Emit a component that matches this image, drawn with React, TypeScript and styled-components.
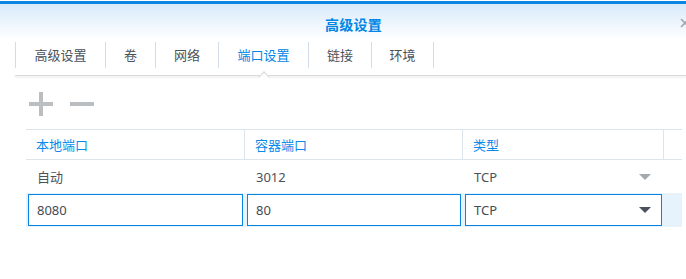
import styled, { createGlobalStyle } from "styled-components";

const GlobalStyle = createGlobalStyle`
  html, body {
    margin: 0;
    padding: 0;
    background: #fff;
  }
  body {
    font-family: "Noto Sans", "Noto Sans CJK SC", sans-serif;
    font-size: 13px;
    color: #4a525c;
    overflow: hidden;
  }
`;

const Window = styled.div`
  width: 686px;
  height: 279px;
  padding-top: 1px;
  background: #fff;
  box-sizing: border-box;
  overflow: hidden;
`;

const TitleBar = styled.div`
  position: relative;
  height: 39px;
  border-top: 3px solid #0a86e2;
  background: linear-gradient(#d8eafa, #ffffff);
  display: flex;
  align-items: center;
  justify-content: center;
  padding: 3px 0 0 21px;
  box-sizing: border-box;
`;

const Title = styled.div`
  font-size: 14px;
  font-weight: bold;
  color: #0086e5;
  letter-spacing: 0.3px;
`;

const Close = styled.svg`
  position: absolute;
  right: -4px;
  top: 14px;
`;

const TabBar = styled.div`
  display: flex;
  margin: 2px 0 0 15px;
  padding-bottom: 7px;
  border-bottom: 1px solid #d9dcdf;
  box-shadow: 0 2px 2px rgba(0, 0, 0, 0.05);
`;

// tab width: label plus ~18px padding each side plus the separator
const Tab = styled.div<{ $chars: number; $active?: boolean; $last?: boolean }>`
  position: relative;
  flex: none;
  width: ${(p) => Math.round(p.$chars * 13.3 + 36.5)}px;
  height: 26px;
  line-height: 26px;
  box-sizing: border-box;
  text-align: center;
  border-left: 1px solid #d3dde7;
  border-right: ${(p) => (p.$last ? "1px solid #d3dde7" : "0")};
  color: ${(p) => (p.$active ? "#0086e5" : "#4a525c")};
  white-space: nowrap;

  &::after {
    content: "";
    display: ${(p) => (p.$active ? "block" : "none")};
    position: absolute;
    left: 50%;
    bottom: -13px;
    width: 7px;
    height: 7px;
    margin-left: -4px;
    background: #fff;
    border-left: 1px solid #d6d9dc;
    border-top: 1px solid #d6d9dc;
    transform: rotate(45deg);
  }
`;

const Toolbar = styled.div`
  display: flex;
  align-items: center;
  gap: 17px;
  height: 53px;
  padding: 3px 0 0 29px;
  box-sizing: border-box;
`;

const ToolButton = styled.svg`
  display: block;
  opacity: 0.9;
`;

const Table = styled.div`
  margin-left: 26px;
  width: 656px;
`;

const Grid = styled.div`
  display: grid;
  grid-template-columns: 219px 218px 201px 18px;
`;

const HeadRow = styled(Grid)`
  height: 31px;
  border-top: 1px solid #dce4ec;
  border-bottom: 1px solid #dce4ec;
  box-sizing: border-box;
`;

const HeadCell = styled.div<{ $last?: boolean }>`
  display: flex;
  align-items: center;
  padding-left: 10px;
  color: #0a8ae8;
  border-right: ${(p) => (p.$last ? "0" : "1px solid #dce4ec")};
`;

const Row = styled(Grid)<{ $selected?: boolean }>`
  height: ${(p) => (p.$selected ? "34px" : "33px")};
  background: ${(p) => (p.$selected ? "#e6f2fc" : "transparent")};
`;

const Cell = styled.div`
  display: flex;
  align-items: center;
  justify-content: space-between;
  padding: 0 13px 0 11px;
`;

const EditCell = styled.div`
  display: flex;
  padding: 1px 2px;
`;

const Field = styled.div`
  flex: 1;
  display: flex;
  align-items: center;
  justify-content: space-between;
  border: 1px solid #0a84e0;
  background: #fff;
  padding: 0 10px 0 8px;
  color: #434b55;
`;

const Caret = styled.span<{ $color: string }>`
  width: 0;
  height: 0;
  border-left: 6px solid transparent;
  border-right: 6px solid transparent;
  border-top: 6px solid ${(p) => p.$color};
`;

const tabs = ["高级设置", "卷", "网络", "端口设置", "链接", "环境"];

export default function App() {
  return (
    <Window>
      <GlobalStyle />
      <TitleBar>
        <Title>高级设置</Title>
        <Close width="10" height="10" viewBox="0 0 10 10">
          <path d="M1 1 L9 9 M9 1 L1 9" stroke="#a3a8ae" strokeWidth="1.6" />
        </Close>
      </TitleBar>

      <TabBar>
        {tabs.map((t, i) => (
          <Tab
            key={t}
            $chars={t.length}
            $active={i === 3}
            $last={i === tabs.length - 1}
          >
            {t}
          </Tab>
        ))}
      </TabBar>

      <Toolbar>
        <ToolButton width="24" height="24" viewBox="0 0 24 24">
          <path d="M0 12 H24 M12 0 V24" stroke="#b4b7bb" strokeWidth="4" />
        </ToolButton>
        <ToolButton width="24" height="24" viewBox="0 0 24 24">
          <path d="M0 12 H24" stroke="#b4b7bb" strokeWidth="4" />
        </ToolButton>
      </Toolbar>

      <Table>
        <HeadRow>
          <HeadCell>本地端口</HeadCell>
          <HeadCell>容器端口</HeadCell>
          <HeadCell>类型</HeadCell>
          <HeadCell $last />
        </HeadRow>
        <Row>
          <Cell>自动</Cell>
          <Cell>3012</Cell>
          <Cell>
            TCP
            <Caret $color="#a4a9af" />
          </Cell>
          <Cell />
        </Row>
        <Row $selected>
          <EditCell>
            <Field>8080</Field>
          </EditCell>
          <EditCell>
            <Field>80</Field>
          </EditCell>
          <EditCell>
            <Field>
              TCP
              <Caret $color="#4a525c" />
            </Field>
          </EditCell>
          <EditCell />
        </Row>
      </Table>
    </Window>
  );
}
